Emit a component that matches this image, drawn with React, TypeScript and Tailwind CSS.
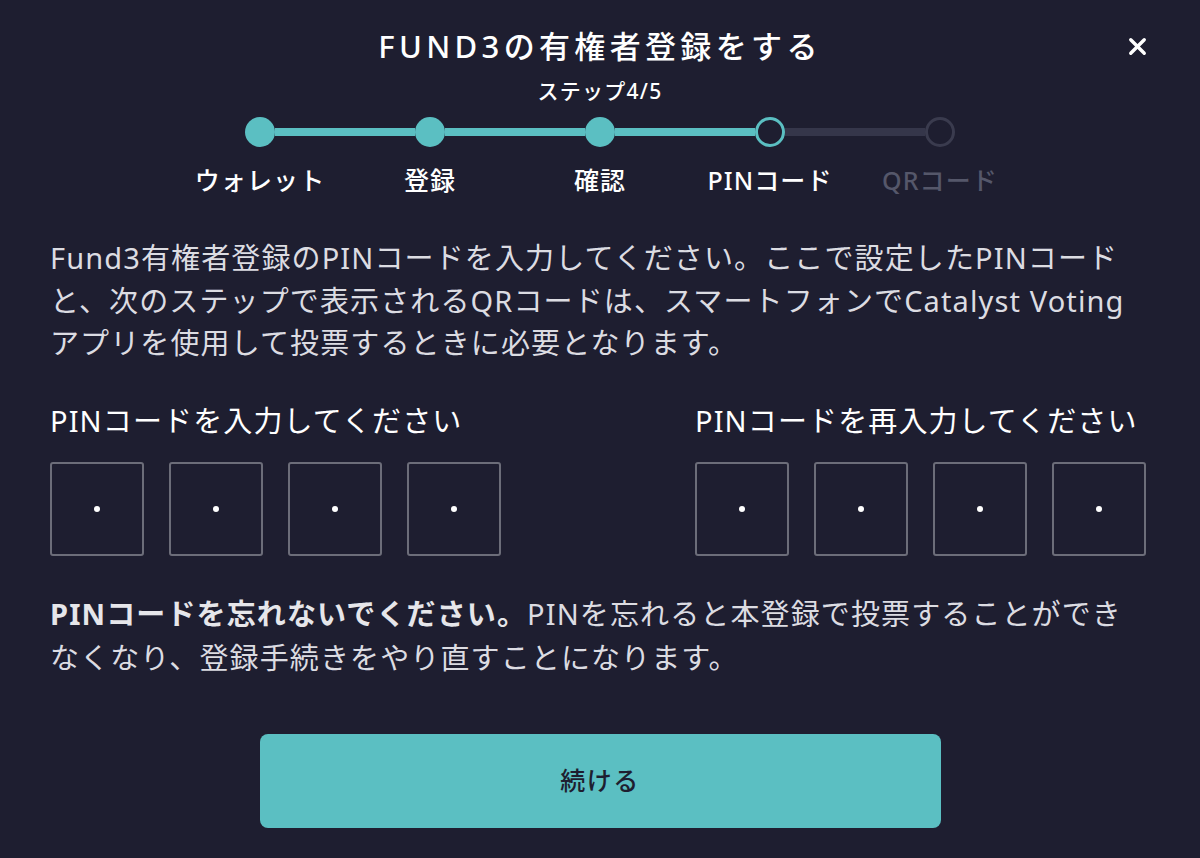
import { X } from "lucide-react";

const font = { fontFamily: "'Noto Sans', 'Noto Sans CJK JP', sans-serif" };

const steps = [
  { label: "ウォレット", state: "done" },
  { label: "登録", state: "done" },
  { label: "確認", state: "done" },
  { label: "PINコード", state: "current" },
  { label: "QRコード", state: "todo" },
];

function PinBoxes() {
  return (
    <div className="flex gap-[25px]">
      {[0, 1, 2, 3].map((i) => (
        <div
          key={i}
          className="flex h-[94px] w-[94px] items-center justify-center rounded-[3px] border-2 border-[#6c6d79]"
        >
          <span className="h-[6px] w-[6px] rounded-full bg-white" />
        </div>
      ))}
    </div>
  );
}

export default function App() {
  return (
    <div
      className="relative min-h-[858px] w-full bg-[#1e1e30] tracking-[0.07em] text-white"
      style={font}
    >
      {/* CLOSE */}
      <button className="absolute right-[49px] top-[33px] text-white">
        <X size={27} strokeWidth={3} />
      </button>

      {/* HEADER */}
      <div className="flex flex-col items-center pt-[26px]">
        <h1 className="text-[31px] font-medium leading-[40px] tracking-[0.14em]">
          FUND3の有権者登録をする
        </h1>
        <p className="mt-[11px] text-[21px] font-medium leading-[28px] tracking-[0.06em]">
          ステップ4/5
        </p>

        {/* STEPPER */}
        <div className="mt-[12px] flex items-center">
          {steps.map((step, i) => (
            <div key={step.label} className="flex items-center">
              {i > 0 && (
                <div
                  className={
                    step.state === "todo"
                      ? "h-[8px] w-[140px] bg-[#35364a]"
                      : "h-[8px] w-[140px] bg-[#5bbfc2]"
                  }
                />
              )}
              {step.state === "done" && (
                <div className="h-[30px] w-[30px] rounded-full bg-[#5bbfc2]" />
              )}
              {step.state === "current" && (
                <div className="h-[30px] w-[30px] rounded-full border-[3px] border-[#5bbfc2] bg-[#1e1e30]" />
              )}
              {step.state === "todo" && (
                <div className="h-[30px] w-[30px] rounded-full border-[3px] border-[#3a3b4e] bg-[#1e1e30]" />
              )}
            </div>
          ))}
        </div>
        <div className="mt-[17px] flex">
          {steps.map((step) => (
            <div
              key={step.label}
              className={
                step.state === "todo"
                  ? "w-[170px] text-center text-[25px] font-medium leading-[32px] text-[#55576a]"
                  : "w-[170px] text-center text-[25px] font-medium leading-[32px] text-white"
              }
            >
              {step.label}
            </div>
          ))}
        </div>
      </div>

      {/* BODY */}
      <div className="pl-[50px] pr-[54px]">
        <p className="mt-[41px] text-[29px] leading-[42.5px] text-[#dcdce2]">
          Fund3有権者登録のPINコードを入力してください。ここで設定したPINコードと、次のステップで表示されるQRコードは、スマートフォンでCatalyst
          Votingアプリを使用して投票するときに必要となります。
        </p>

        <div className="mt-[36px] flex justify-between">
          <div>
            <p className="text-[29px] leading-[40px]">PINコードを入力してください</p>
            <div className="mt-[21px]">
              <PinBoxes />
            </div>
          </div>
          <div>
            <p className="text-[29px] leading-[40px]">PINコードを再入力してください</p>
            <div className="mt-[21px]">
              <PinBoxes />
            </div>
          </div>
        </div>

        <p className="mt-[36px] text-[29px] leading-[44px] text-[#dcdce2]">
          <span className="font-bold text-[#e6e6ea]">PINコードを忘れないでください。</span>
          PINを忘れると本登録で投票することができなくなり、登録手続きをやり直すことになります。
        </p>
      </div>

      {/* ACTION */}
      <div className="mt-[54px] flex justify-center pb-[31px]">
        <button className="h-[94px] w-[681px] rounded-[8px] bg-[#5bbfc2] text-[25px] font-medium tracking-[0.06em] text-[#1e1e30]">
          続ける
        </button>
      </div>
    </div>
  );
}
